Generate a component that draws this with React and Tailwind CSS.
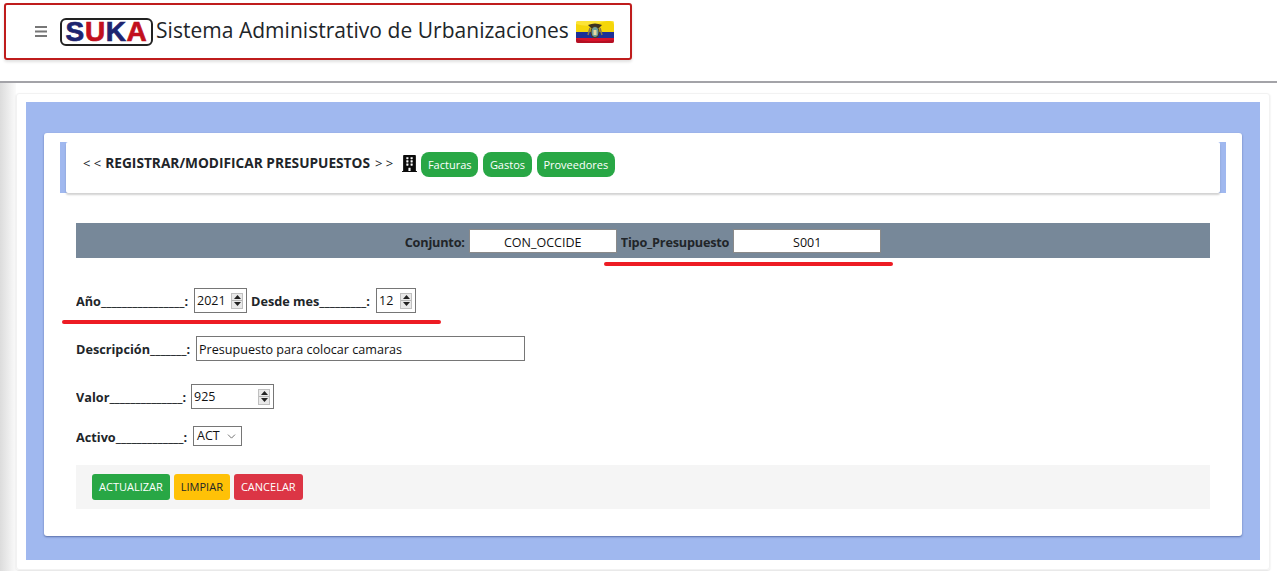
import { ChevronDown } from "lucide-react";
import { FaBuilding } from "react-icons/fa";

const FONT = "font-['Open_Sans','Noto_Sans',sans-serif]";

// Ecuador flag, small waving rectangle with the coat of arms
function Flag() {
  return (
    <svg width="38" height="22" viewBox="0 0 38 22" className="rounded-[2px] ml-[7px]">
      <rect width="38" height="11" fill="#f5d60a" />
      <rect y="11" width="38" height="6" fill="#1c2f96" />
      <rect y="17" width="38" height="5" fill="#d8122a" />
      <path d="M0 3 Q12 7 24 2 T38 4 V0 H0 Z" fill="#ffe94a" opacity="0.7" />
      <path d="M0 18 Q14 22 38 19 V22 H0 Z" fill="#9c0d20" opacity="0.6" />
      <path d="M12 4 Q19 1 26 4 L23 7 H15 Z" fill="#3d3320" />
      <path d="M14 7 L12 14 M24 7 L26 14" stroke="#8a7a4a" strokeWidth="1.5" />
      <ellipse cx="19" cy="11" rx="4" ry="5.5" fill="#6f9f9a" stroke="#4a3a20" strokeWidth="1.2" />
      <rect x="17.5" y="9" width="3" height="5" fill="#e8d9a0" />
    </svg>
  );
}

function Logo() {
  return (
    <div className="w-[93px] h-[28px] border-2 border-[#222] rounded-[6px] bg-white flex items-center justify-center font-['Liberation_Sans',sans-serif] font-bold text-[28px] leading-none tracking-[0.6px] [-webkit-text-stroke:0.7px]">
      <span className="text-[#1d2470]">S</span>
      <span className="text-[#c2101d]">U</span>
      <span className="text-[#1d2470]">K</span>
      <span className="text-[#c2101d]">A</span>
    </div>
  );
}

function MenuIcon() {
  return (
    <svg width="12" height="11" viewBox="0 0 12 11" className="mr-[13px]">
      <path d="M0 1h12M0 5.5h12M0 10h12" stroke="#777" strokeWidth="2" />
    </svg>
  );
}

function Spinner() {
  return (
    <span className="w-[12px] h-[16px] bg-[#e9e9e9] border border-[#c0c0c0] flex flex-col shrink-0">
      <span className="flex-1 flex items-center justify-center border-b border-[#b5b5b5]">
        <svg width="7" height="4" viewBox="0 0 7 4"><path d="M3.5 0 7 4H0Z" fill="#222" /></svg>
      </span>
      <span className="flex-1 flex items-center justify-center">
        <svg width="7" height="4" viewBox="0 0 7 4"><path d="M0 0H7L3.5 4Z" fill="#222" /></svg>
      </span>
    </span>
  );
}

function NumberField({ value, width }) {
  return (
    <div className={`${width} h-[25px] border border-[#767676] flex items-center pl-[2px] pr-[3px] text-[12.5px] text-[#111]`}>
      <span className="flex-1 pt-[2px]">{value}</span>
      <Spinner />
    </div>
  );
}

function Label({ width, children }) {
  return (
    <span className={`${width} pt-[3px] font-bold text-[12.7px] text-[#212529] whitespace-pre overflow-hidden`}>
      {children}
    </span>
  );
}

function Pill({ children }) {
  return (
    <button className="h-[25px] px-[6.7px] rounded-[8px] bg-[#28a745] text-white text-[11px] leading-none">
      {children}
    </button>
  );
}

function ActionButton({ color, children }) {
  return (
    <button className={`h-[26px] px-[7px] pb-[1px] rounded-[3px] text-[11px] leading-none ${color}`}>
      {children}
    </button>
  );
}

function ReadonlyBox({ value }) {
  return (
    <div className="w-[148px] h-[24px] shrink-0 bg-white border border-[#8a8a8a] flex items-center justify-center pt-[4px] text-[12.5px] text-[#111]">
      {value}
    </div>
  );
}

export default function App() {
  return (
    <div className={`${FONT} w-[1277px] h-[571px] overflow-hidden bg-white text-[#212529]`}>
      <header className="h-[83px] border-b-2 border-[#a3a3a8] pt-[3px] pl-[4px]">
        <div className="w-[628px] h-[57px] border-2 border-[#bf1c1c] rounded-[3px] shadow-[0_2px_3px_rgba(0,0,0,0.12)] flex items-center pl-[29px]">
          <MenuIcon />
          <Logo />
          <span className="ml-[3px] pb-[2px] text-[21px] tracking-[0.03px] text-[#212529] whitespace-nowrap">
            Sistema Administrativo de Urbanizaciones
          </span>
          <Flag />
        </div>
      </header>

      <div className="flex h-[488px]">
        <div className="w-[16px] bg-gradient-to-r from-[#dcdcdc] to-[#fbfbfb]" />
        <main className="w-[1254px] h-[477px] mt-[10px] border border-[#f2f2f2] rounded-[3px] shadow-[0_1px_2px_rgba(0,0,0,0.12)] pt-[8px] pl-[9px]">
          <div className="w-[1234px] h-[458px] bg-[#a0b8ef] pt-[31px] pl-[18px]">
            <section className="w-[1198px] h-[403px] bg-white rounded-[3px] shadow-[0_1px_2px_rgba(40,60,120,0.6)] pt-[9px] pl-[16px]">
              <div className="w-[1166px] h-[51px] bg-[#a0b8ef] px-[6px]">
                <div className="h-full bg-white rounded-[2px] shadow-[0_2px_2px_rgba(0,0,0,0.18)] flex items-center pl-[17px] pb-[6px] text-[13px]">
                  <span className="mr-[4px] mb-[2px]">&lt; &lt;</span>
                  <span className="mb-[2px] font-bold text-[13.7px]">REGISTRAR/MODIFICAR PRESUPUESTOS</span>
                  <span className="ml-[5px] mb-[2px]">&gt; &gt;</span>
                  <FaBuilding className="ml-[8px] mr-[3px] mb-[2px] text-[#0b0b0b] text-[17px]" />
                  <div className="flex gap-[5px]">
                    <Pill>Facturas</Pill>
                    <Pill>Gastos</Pill>
                    <Pill>Proveedores</Pill>
                  </div>
                </div>
              </div>

              <div className="ml-[16px] mt-[30px] w-[1134px]">
                <div className="relative h-[35px] pt-[1px] bg-[#778899] flex items-center justify-center gap-[4px]">
                  <Label width="w-auto tracking-[-0.2px]">Conjunto:</Label>
                  <ReadonlyBox value="CON_OCCIDE" />
                  <Label width="w-auto tracking-[-0.2px]">Tipo_Presupuesto</Label>
                  <ReadonlyBox value="S001" />
                  <span className="absolute left-[528px] top-[39px] w-[289px] h-[4px] rounded-full bg-[#ed1c24]" />
                </div>

                <div className="relative flex items-center gap-[4px] mt-[30px] h-[25px]">
                  <Label width="w-[114px]">Año________________:</Label>
                  <NumberField value="2021" width="w-[53px]" />
                  <Label width="w-[121px]">Desde mes_________:</Label>
                  <NumberField value="12" width="w-[40px]" />
                  <span className="absolute left-[-14px] top-[32px] w-[379px] h-[4px] rounded-full bg-[#ed1c24]" />
                </div>

                <div className="flex items-center gap-[4px] mt-[23px] h-[25px]">
                  <Label width="w-[116px]">Descripción_______:</Label>
                  <div className="w-[329px] h-[25px] border border-[#767676] flex items-center pl-[2px] pt-[4px] text-[12.6px] text-[#111]">
                    Presupuesto para colocar camaras
                  </div>
                </div>

                <div className="flex items-center gap-[4px] mt-[23px] h-[25px]">
                  <Label width="w-[111px]">Valor______________:</Label>
                  <NumberField value="925" width="w-[83px]" />
                </div>

                <div className="flex items-center gap-[4px] mt-[17px] h-[20px]">
                  <Label width="w-[113px]">Activo_____________:</Label>
                  <div className="w-[49px] h-[20px] border border-[#767676] flex items-center justify-between pl-[3px] pr-[3px] text-[12.5px] text-[#111]">
                    <span className="pt-[1px]">ACT</span>
                    <ChevronDown size={13} strokeWidth={1.5} className="text-[#555]" />
                  </div>
                </div>

                <div className="mt-[19px] h-[44px] bg-[#f5f5f5] flex items-center gap-[4px] pl-[16px]">
                  <ActionButton color="bg-[#28a745] text-white">ACTUALIZAR</ActionButton>
                  <ActionButton color="bg-[#ffc107] text-[#212529]">LIMPIAR</ActionButton>
                  <ActionButton color="bg-[#dc3545] text-white">CANCELAR</ActionButton>
                </div>
              </div>
            </section>
          </div>
        </main>
      </div>
    </div>
  );
}
